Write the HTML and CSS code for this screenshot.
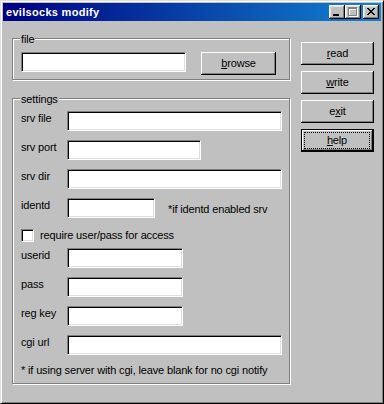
FILE: index.html
```html
<!DOCTYPE html>
<html>
<head>
<meta charset="utf-8">
<title>evilsocks modify</title>
<link rel="stylesheet" href="styles.css">
</head>
<body>
<div class="window">
  <div class="titlebar">
    <span class="title">evilsocks modify</span>
    <div class="caption-buttons">
      <span class="cap-btn"><svg width="16" height="14" viewBox="0 0 16 14" shape-rendering="crispEdges"><rect x="4" y="9" width="6" height="2" fill="#000"/></svg></span>
      <span class="cap-btn"><svg width="16" height="14" viewBox="0 0 16 14" shape-rendering="crispEdges"><path d="M4 3h9v9h-9z M5 5h7v6h-7z" fill="#fff" fill-rule="evenodd"/><path d="M3 2h9v9h-9z M4 4h7v6h-7z" fill="#808080" fill-rule="evenodd"/></svg></span>
      <span class="cap-btn close"><svg width="16" height="14" viewBox="0 0 16 14" shape-rendering="crispEdges"><path d="M4 3h2v1h-2z M10 3h2v1h-2z M5 4h2v1h-2z M9 4h2v1h-2z M6 5h4v1h-4z M7 6h2v1h-2z M6 7h4v1h-4z M5 8h2v1h-2z M9 8h2v1h-2z M4 9h2v1h-2z M10 9h2v1h-2z" fill="#000"/></svg></span>
    </div>
  </div>
  <div class="client">
    <div class="main">
      <div class="group group-file">
        <div class="group-label">file</div>
        <div class="file-row">
          <span class="field w-file"></span>
          <span class="btn browse"><span><u>b</u>rowse</span></span>
        </div>
      </div>
      <div class="group group-settings">
        <div class="group-label">settings</div>
        <div class="row first"><span class="lbl">srv file</span><span class="field w-long"></span></div>
        <div class="row"><span class="lbl">srv port</span><span class="field w-port"></span></div>
        <div class="row"><span class="lbl">srv dir</span><span class="field w-long"></span></div>
        <div class="row"><span class="lbl">identd</span><span class="field w-identd"></span><span class="note">*if identd enabled srv</span></div>
        <div class="check-row"><span class="checkbox"></span><span class="check-label">require user/pass for access</span></div>
        <div class="row after-check"><span class="lbl">userid</span><span class="field w-short"></span></div>
        <div class="row"><span class="lbl">pass</span><span class="field w-short"></span></div>
        <div class="row"><span class="lbl">reg key</span><span class="field w-short"></span></div>
        <div class="row"><span class="lbl">cgi url</span><span class="field w-long"></span></div>
        <div class="footnote">* if using server with cgi, leave blank for no cgi notify</div>
      </div>
    </div>
    <div class="side">
      <span class="btn side-btn"><span><u>r</u>ead</span></span>
      <span class="btn side-btn"><span><u>w</u>rite</span></span>
      <span class="btn side-btn"><span>e<u>x</u>it</span></span>
      <span class="btn side-btn default"><span class="focus"><u>h</u>elp</span></span>
    </div>
  </div>
</div>
</body>
</html>
```

FILE: styles.css
```css
* { box-sizing: border-box; }
html, body { margin: 0; padding: 0; background: #c0c0c0; }
body {
  font-family: "Liberation Sans", Arial, sans-serif;
  font-size: 11px;
  line-height: 13px;
  letter-spacing: -0.15px;
  color: #000;
}
.window {
  width: 384px;
  height: 404px;
  border: 1px solid;
  border-color: #dfdfdf #000 #000 #dfdfdf;
  box-shadow: inset 1px 1px 0 #fff, inset -1px -1px 0 #808080;
  padding: 2px;
  background: #c0c0c0;
  display: flex;
  flex-direction: column;
}
.titlebar {
  height: 18px;
  flex: none;
  background: linear-gradient(to right, #000080, #1084d0);
  display: flex;
  align-items: center;
  padding: 0 2px 0 3px;
}
.title {
  color: #fff;
  font-weight: bold;
  font-size: 11px;
  letter-spacing: 0.3px;
  flex: 1;
}
.caption-buttons { display: flex; }
.cap-btn {
  width: 16px;
  height: 14px;
  display: block;
  background: #c0c0c0;
  box-shadow: inset -1px -1px 0 #000, inset 1px 1px 0 #fff, inset -2px -2px 0 #808080, inset 2px 2px 0 #dfdfdf;
}
.cap-btn svg { display: block; }
.cap-btn.close { margin-left: 2px; }

.client {
  display: flex;
  align-items: flex-start;
  padding: 17px 0 0 9px;
}
.main { width: 279px; }
.group {
  width: 278px;
  border: 1px solid #808080;
  box-shadow: 1px 1px 0 #fff, inset 1px 1px 0 #fff;
  padding: 0 0 4px 8px;
}
.group-label {
  display: inline-block;
  margin: -6px 0 5px -1px;
  padding: 0 1px;
  background: #c0c0c0;
  vertical-align: top;
}
.group-settings { margin-top: 18px; padding-bottom: 6px; }
.group-settings .group-label { display: block; width: max-content; }
.file-row { display: flex; align-items: flex-start; }

.field {
  display: block;
  height: 20px;
  flex: none;
  background: #fff;
  border-style: solid;
  border-width: 1px;
  border-color: #808080 #fff #fff #808080;
  box-shadow: inset 1px 1px 0 #000, inset -1px -1px 0 #dfdfdf;
}
.w-file { width: 165px; }
.w-long { width: 215px; }
.w-port { width: 134px; }
.w-identd { width: 88px; }
.w-short { width: 116px; }

.btn {
  display: flex;
  align-items: center;
  justify-content: center;
  height: 23px;
  background: #c0c0c0;
  box-shadow: inset -1px -1px 0 #000, inset 1px 1px 0 #fff, inset -2px -2px 0 #808080;
}
.browse { width: 75px; margin-left: 15px; flex: none; }

.row { display: flex; align-items: flex-start; height: 20px; margin-top: 9px; }
.row.first { margin-top: 0; }
.row.after-check { margin-top: 6px; }
.lbl { width: 46px; padding-top: 1px; flex: none; }
.note { margin-left: 13px; padding-top: 5px; }
.check-row { display: flex; align-items: center; height: 13px; margin-top: 11px; }
.checkbox {
  width: 13px;
  height: 13px;
  background: #fff;
  border-style: solid;
  border-width: 1px;
  border-color: #808080 #fff #fff #808080;
  box-shadow: inset 1px 1px 0 #000, inset -1px -1px 0 #dfdfdf;
}
.check-label { margin-left: 6px; }
.footnote { margin-top: 9px; }

.side {
  display: flex;
  flex-direction: column;
  gap: 6px;
  margin: 4px 0 0 10px;
}
.side-btn { width: 73px; }
.btn.default {
  box-shadow: inset 0 0 0 1px #000, inset -2px -2px 0 #000, inset 2px 2px 0 #fff, inset -3px -3px 0 #808080;
  align-items: stretch;
}
.focus {
  flex: 1;
  margin: 3px 4px 3px 3px;
  border: 1px dotted #000;
  display: flex;
  align-items: center;
  justify-content: center;
}
```
